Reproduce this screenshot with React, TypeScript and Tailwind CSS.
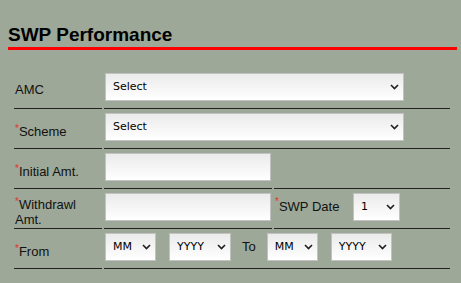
import { ReactNode } from 'react'

const MONTHS = ["MM", "Jan", "Feb", "Mar", "Apr", "May", "Jun", "Jul", "Aug", "Sep", "Oct", "Nov", "Dec"]
const YEARS = ["YYYY", "2020", "2021", "2022", "2023", "2024", "2025"]
const DAYS = ["1", "5", "10", "15", "20", "25"]

function Chevron() {
  return (
    <svg
      width="9"
      height="6"
      viewBox="0 0 9 6"
      className="pointer-events-none absolute right-[5px] top-1/2 -translate-y-1/2"
    >
      <polyline points="1,1 4.5,4.5 8,1" fill="none" stroke="#1e1e1e" strokeWidth="1.6" />
    </svg>
  )
}

function Dropdown({ options, className }: { options: string[]; className: string }) {
  return (
    <div className={`relative h-[28px] ${className}`}>
      <select className="h-full w-full appearance-none rounded-none border border-[#c2c2c2] bg-gradient-to-b from-[#ebebeb] to-white pl-[7px] pr-[18px] font-['DejaVu_Sans',Verdana,sans-serif] text-[11px] text-black outline-none">
        {options.map((option) => (
          <option key={option}>{option}</option>
        ))}
      </select>
      <Chevron />
    </div>
  )
}

function TextBox() {
  return (
    <input
      type="text"
      className="h-[28px] w-[166px] rounded-none border border-[#c2c2c2] bg-gradient-to-b from-[#ebebeb] to-white px-[4px] text-[12px] outline-none"
    />
  )
}

function Required() {
  return <span className="align-top text-[10px] leading-[10px] text-[#e8302c]">*</span>
}

function Label({ children, className = "" }: { children: ReactNode; className?: string }) {
  return (
    <div className={`flex w-[88px] items-center border-b border-[#222] px-[1px] text-[13px] leading-[15px] ${className}`}>
      <div>{children}</div>
    </div>
  )
}

function Cell({ children, className = "" }: { children?: ReactNode; className?: string }) {
  return (
    <div className={`flex items-start border-b border-[#222] pl-[1px] pt-[4px] ${className}`}>
      {children}
    </div>
  )
}

export default function App() {
  return (
    <div className="min-h-screen bg-[#9da898] font-['Liberation_Sans',Arial,sans-serif] text-[#111]">
      {/* Title */}
      <div className="pl-[8px] pt-[24px]">
        <h2 className="w-[449px] border-b-[3px] border-[#ff0000] pb-[1px] text-[19px] font-bold leading-[22px] text-black">
          SWP Performance
        </h2>
      </div>

      {/* Form */}
      <div className="ml-[14px] mt-[19px] flex w-[436px] flex-col">
        <div className="flex h-[40px] gap-[2px]">
          <Label className="pt-[2px]">AMC</Label>
          <Cell className="flex-1">
            <Dropdown options={["Select"]} className="w-[299px]" />
          </Cell>
        </div>

        <div className="flex h-[40px] gap-[2px]">
          <Label className="pt-[6px]">
            <Required />Scheme
          </Label>
          <Cell className="flex-1">
            <Dropdown options={["Select"]} className="w-[299px]" />
          </Cell>
        </div>

        <div className="flex h-[40px] gap-[2px]">
          <Label className="pt-[6px]">
            <Required />Initial Amt.
          </Label>
          <Cell className="w-[168px]">
            <TextBox />
          </Cell>
          <Cell className="flex-1" />
        </div>

        <div className="flex h-[40px] gap-[2px]">
          <Label className="pt-[7px] leading-[14px]">
            <Required />Withdrawl
            <br />
            Amt.
          </Label>
          <Cell className="w-[168px]">
            <TextBox />
          </Cell>
          <Cell className="flex-1">
            <span className="flex h-[28px] w-[78px] items-center text-[13px]">
              <span>
                <Required />SWP Date
              </span>
            </span>
            <Dropdown options={DAYS} className="w-[47px]" />
          </Cell>
        </div>

        <div className="flex h-[40px] gap-[2px]">
          <Label className="pt-[6px]">
            <Required />From
          </Label>
          <Cell className="flex-1">
            <Dropdown options={MONTHS} className="w-[51px]" />
            <Dropdown options={YEARS} className="ml-[13px] w-[62px]" />
            <span className="mx-[11px] flex h-[28px] items-center text-[13px]">To</span>
            <Dropdown options={MONTHS} className="w-[51px]" />
            <Dropdown options={YEARS} className="ml-[13px] w-[61px]" />
          </Cell>
        </div>
      </div>
    </div>
  )
}
